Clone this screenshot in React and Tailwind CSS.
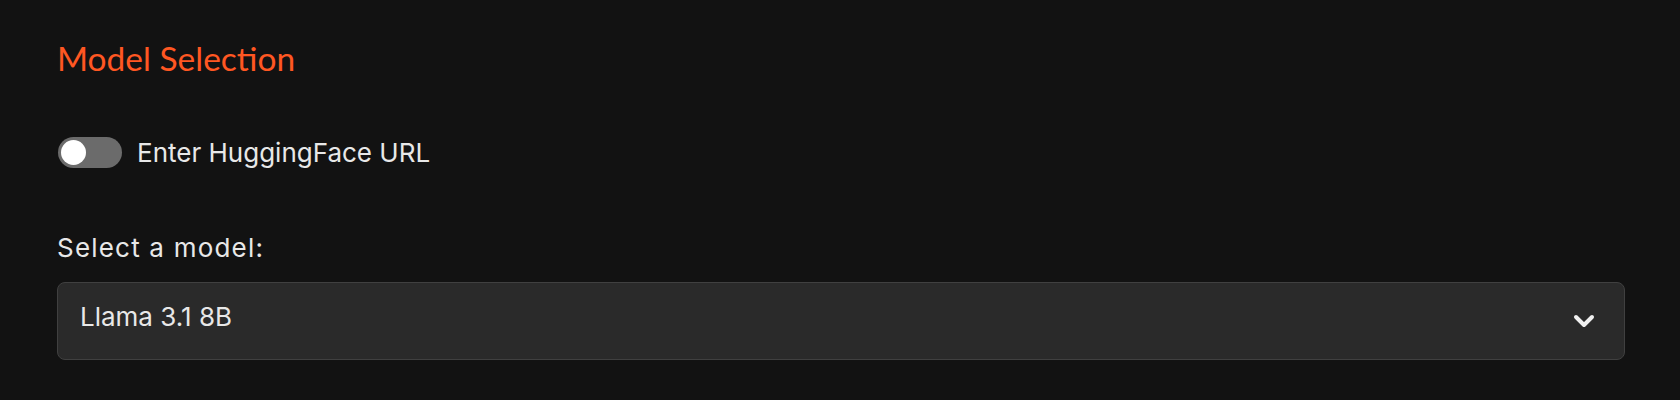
export default function App() {
  return (
    <div className="w-full h-[400px] bg-[#121212] pl-[57px] pr-[55px] pt-[38px] flex flex-col">
      <h2 className="text-[33.5px] leading-[41px] text-[#ff5722] font-normal" style={{ fontFamily: 'Lato, "Open Sans", sans-serif' }}>
        Model Selection
      </h2>
      <div className="mt-[58px] flex items-center gap-[15px]" style={{ fontFamily: 'Inter, "Noto Sans", sans-serif' }}>
        <div className="w-[64px] h-[31px] rounded-full bg-[#6b6b6b] flex items-center pl-[3px] ml-[1px]">
          <div className="w-[25px] h-[25px] rounded-full bg-white"></div>
        </div>
        <span className="text-[26px] leading-[30px] text-[#e8e8e8]">Enter HuggingFace URL</span>
      </div>
      <div className="mt-[65px] text-[26px] leading-[30px] tracking-[1.2px] text-[#e8e8e8]" style={{ fontFamily: 'Inter, "Noto Sans", sans-serif' }}>
        Select a model:
      </div>
      <div className="mt-[19px] h-[78px] rounded-[8px] border border-[#404040] bg-[#2a2a2a] flex items-center justify-between pl-[22px] pr-[24px]" style={{ fontFamily: 'Inter, "Noto Sans", sans-serif' }}>
        <span className="text-[26px] leading-[30px] text-[#e8e8e8] mb-[8px]">Llama 3.1 8B</span>
        <svg width="32" height="32" viewBox="0 0 24 24" fill="none" stroke="#f0f0f0" strokeWidth="3" strokeLinecap="round" strokeLinejoin="round">
          <path d="m6 9 6 6 6-6" />
        </svg>
      </div>
    </div>
  );
}
